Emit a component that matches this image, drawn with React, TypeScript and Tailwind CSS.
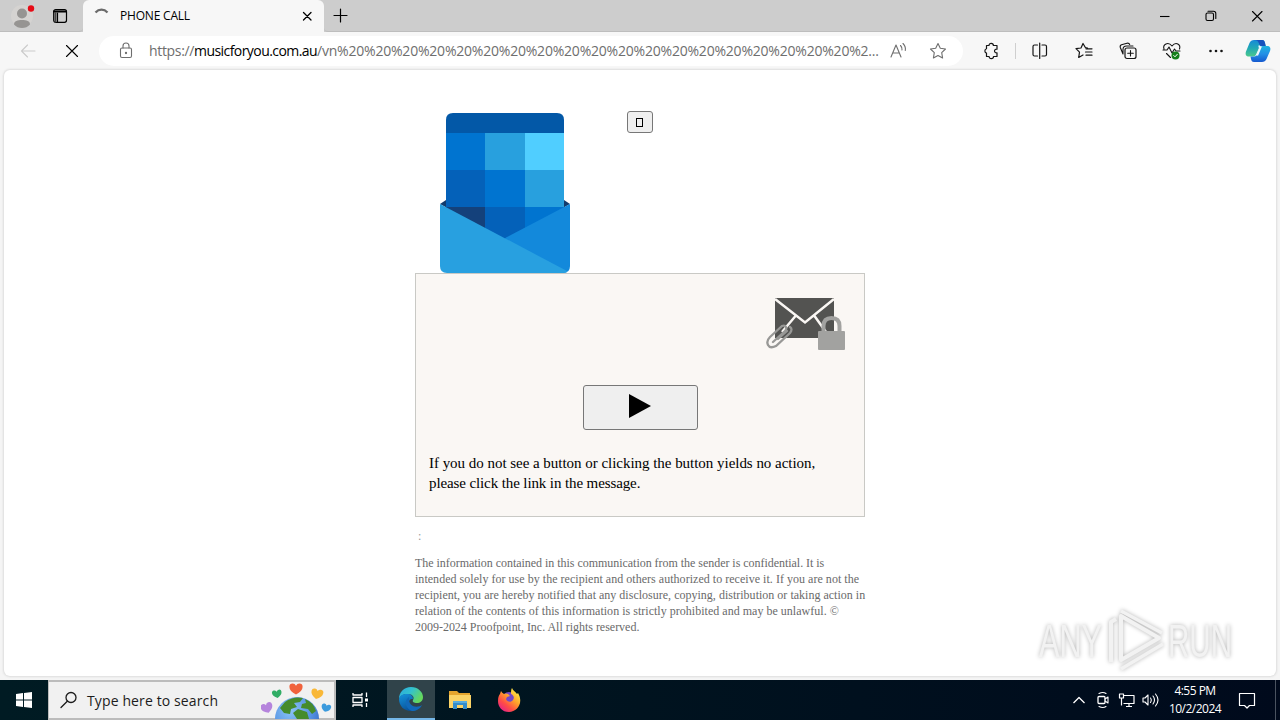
import type { ReactNode } from 'react'

interface IconProps {
  w?: number
  h?: number
  className?: string
  children: ReactNode
}

function Icon({ w = 20, h = 20, className = "", children }: IconProps) {
  return (
    <svg
      width={w}
      height={h}
      viewBox={`0 0 ${w} ${h}`}
      fill="none"
      stroke="currentColor"
      strokeWidth="1.1"
      strokeLinecap="round"
      strokeLinejoin="round"
      className={`shrink-0 ${className}`}
    >
      {children}
    </svg>
  )
}

function TitleBar() {
  return (
    <div className="flex h-8 items-stretch bg-[#cdcdcd]">
      <div className="flex w-[83px] items-center rounded-br-sm border-b border-[#bdbdbd] pl-[11px]">
        <Icon w={26} h={28} className="mt-px">
          <circle cx="11" cy="14" r="11" fill="#d5d3d1" stroke="none" />
          <circle cx="11" cy="11.500" r="5" fill="#969492" stroke="none" />
          <path d="M3 22.500c0-3.500 3.500-4.500 8-4.500s8 1 8 4.500c-2 2.500-5 3.500-8 3.500s-6-1-8-3.500z" fill="#969492" stroke="none" />
          <circle cx="20" cy="6.500" r="3.200" fill="#e60b16" stroke="none" />
        </Icon>
        <Icon w={16} h={16} className="ml-[15px] text-black">
          <rect x="1.700" y="1.700" width="12.800" height="12.600" rx="2" strokeWidth="1.200" />
          <path d="M2 3.500h12" strokeWidth="1.800" />
          <path d="M5.500 5v9" strokeWidth="1.200" />
          <path d="M3.500 5v8.500" strokeWidth="2" stroke="#444" />
        </Icon>
      </div>
      <div className="flex w-[241px] items-center rounded-t-md bg-[#f7f7f7] pl-[11px]">
        <Icon w={16} h={16} className="text-[#6b6b6b]">
          <path d="M1.500 4.500C5 .7 10 .7 13.500 4.500" strokeWidth="2.300" strokeLinecap="butt" />
        </Icon>
        <span className="ml-[10px] w-[181px] text-[12px] leading-4 tracking-[-0.2px] whitespace-nowrap text-black">PHONE CALL</span>
        <Icon w={12} h={12} className="text-black">
          <path d="M2.500 2.500l7.500 7.500M10 2.500l-7.500 7.500" strokeWidth="1.300" />
        </Icon>
      </div>
      <div className="flex flex-1 items-center rounded-bl-sm border-b border-[#bdbdbd] pl-[9px] text-black">
        <Icon w={16} h={16}>
          <path d="M7.500 1v13M1 7.500h13" strokeWidth="1.200" />
        </Icon>
        <Icon w={12} h={12} className="ml-auto">
          <path d="M1 6.500h9.500" strokeLinecap="butt" />
        </Icon>
        <Icon w={12} h={12} className="ml-[34px]">
          <rect x="1" y="3" width="7.500" height="7.500" rx="1.500" />
          <path d="M3 1.200h5.500q2.300 0 2.300 2.300v5" />
        </Icon>
        <Icon w={12} h={12} className="mr-[17px] ml-[34px]">
          <path d="M1.500 1.500l9.500 9.500M11 1.500l-9.500 9.500" />
        </Icon>
      </div>
    </div>
  )
}

function Copilot() {
  return (
    <svg width="26" height="26" viewBox="0 0 26 26" className="shrink-0">
      <defs>
        <linearGradient id="cpA" x1="0" y1="0" x2="0" y2="1">
          <stop offset="0" stopColor="#1689d8" />
          <stop offset=".5" stopColor="#21a9b4" />
          <stop offset="1" stopColor="#4cc98c" />
        </linearGradient>
        <linearGradient id="cpB" x1="0" y1="0" x2="0" y2="1">
          <stop offset="0" stopColor="#1fb3df" />
          <stop offset=".5" stopColor="#2490e6" />
          <stop offset="1" stopColor="#1559cf" />
        </linearGradient>
      </defs>
      <path d="M9 2h8c2 0 2.500 1 3 3l.7 3H17c-2 0-3 1-3.500 3l-2 4.500c-.6 2-1.500 3-3.500 3H4c-3 0-4-2-3-5L4.500 5C5.300 3 7 2 9 2z" fill="url(#cpA)" />
      <path d="M9 2h8c2 0 2.500 1 3 3l.7 3H16c-1 0-1.500-1-2-2.500C13.200 3 12 2 9 2z" fill="#1852bd" />
      <path d="M17 24H9c-2 0-2.500-1-3-3l-.5-2.500H9c2 0 3-1 3.500-3l2-4.500c.6-2 1.500-3 3.500-3H22c3 0 4 2 3 5l-3.500 8c-.8 2-2.500 3-4.500 3z" fill="url(#cpB)" />
      <path d="M16 8.500l-3.800 9M15 8.500h-1.500" stroke="#eef9ff" strokeWidth="1.800" fill="none" />
    </svg>
  )
}

function Toolbar() {
  return (
    <div className="flex h-[38px] items-center bg-[#f7f7f7] pl-5">
      <Icon w={18} h={18} className="text-[#cbcbcb]">
        <path d="M15 9H1.500M7.500 3L1.500 9l6 6" />
      </Icon>
      <Icon w={16} h={16} className="ml-[26px] text-black">
        <path d="M2.500 2.500l11 11M13.500 2.500l-11 11" />
      </Icon>
      <div className="ml-[19px] flex h-[30px] w-[864px] items-center rounded-full bg-white pl-[19px] text-[#6e6e6e]">
        <Icon w={16} h={18}>
          <rect x="2.500" y="6" width="11" height="9.500" rx="1.500" />
          <path d="M5 6V4a3 3 0 0 1 6 0v2" />
          <circle cx="8" cy="11" r=".6" fill="currentColor" />
        </Icon>
        <div className="ml-[15px] w-[742px] text-[14px] leading-5 tracking-[-0.21px] whitespace-nowrap">
          <span className="tracking-[-0.33px]">https://</span>
          <span className="tracking-[-0.57px] text-black">musicforyou.com.au</span>
          /vn%20%20%20%20%20%20%20%20%20%20%20%20%20%20%20%20%20%20%20%2...
        </div>
        <Icon w={18} h={18} className="-ml-px">
          <path d="M1 15L6 3l5 12M2.600 11h6.800M10.500 3.500q2 2 1.500 4.500M13 1.500q3 3 2.300 7" />
        </Icon>
        <Icon w={18} h={18} className="ml-[21px]">
          <path d="M9 1.500l2.300 4.800 5.200.7-3.800 3.700.9 5.300L9 13.500 4.400 16l.9-5.300L1.500 7l5.200-.7z" />
        </Icon>
      </div>
      <div className="flex items-center pl-[20px] text-[#151515]">
        <Icon w={18} h={18}>
          <path d="M3.500 3.500H6a2.200 2.200 0 0 1 4.400 0H14v3.700c-3.300-.4-3.300 4 0 3.600v3.700h-3.500a2.200 2.200 0 0 1-4.400 0H3.500v-3.400a2.300 2.300 0 0 1 0-4.400z" strokeWidth="1.200" />
        </Icon>
        <div className="ml-[14px] h-4 w-px bg-[#cfcfcf]" />
        <Icon w={18} h={18} className="ml-[15px]">
          <path d="M6.500 3H3.500Q2 3 2 4.500v8Q2 14 3.500 14h3M11 3h3q1.500 0 1.500 1.500v8Q15.500 14 14 14h-3M8.700 1v15.500" strokeWidth="1.200" />
        </Icon>
        <Icon w={18} h={18} className="ml-[26px]">
          <path d="M12.500 6l-2-.3L8 1.500 6 6l-5 .7 3.500 3.500-.8 5.300L8 13M11 6.800h6M10.500 10h6.500M11 13.200h6" strokeWidth="1.200" />
        </Icon>
        <Icon w={18} h={18} className="ml-[26px]">
          <rect x="6" y="6" width="11" height="10.500" rx="2" strokeWidth="1.200" />
          <path d="M11.500 8.500v5.500M8.700 11.300h5.600M4 12L1.300 5.500q-.6-2 1.200-2.700l5.500-1.600q2-.4 2.700 1.300M4 12V7.500q0-3.500 3.500-3.500H14" />
        </Icon>
        <Icon w={20} h={20} className="ml-[25px]">
          <path d="M2 8C.5 3.500 6 0 10 5c4-5 9-1.500 7.500 3M4.500 12.500L8.500 16.500M1 9h4l2-3 3 6 2.500-4 1.500 2h4" strokeWidth="1.100" />
          <circle cx="13.500" cy="14.500" r="4" fill="#16801b" stroke="none" />
          <path d="M11.700 14.500l1.300 1.300 2.300-2.500" stroke="white" strokeWidth="1" />
        </Icon>
        <Icon w={18} h={18} className="ml-[25px]">
          <circle cx="3.500" cy="9" r="1.300" fill="currentColor" stroke="none" />
          <circle cx="9" cy="9" r="1.300" fill="currentColor" stroke="none" />
          <circle cx="14.500" cy="9" r="1.300" fill="currentColor" stroke="none" />
        </Icon>
        <div className="ml-[20px]">
          <Copilot />
        </div>
      </div>
    </div>
  )
}

function CalendarLogo() {
  return (
    <svg width="130" height="160" viewBox="0 0 130 160" className="block">
      <defs>
        <clipPath id="envelope">
          <path d="M0 86h130v67q0 7-7 7H7q-7 0-7-7z" />
        </clipPath>
      </defs>
      <path d="M0 91l6-4h118l6 4-65 36z" fill="#123b6d" />
      <path d="M6 20V7q0-7 7-7h104q7 0 7 7v13z" fill="#0358a7" />
      <path d="M6 20h39v37H6z" fill="#0074d0" />
      <path d="M45 20h40v37H45z" fill="#28a0de" />
      <path d="M85 20h39v37H85z" fill="#50ceff" />
      <path d="M6 57h39v37H6z" fill="#0461b9" />
      <path d="M45 57h40v37H45z" fill="#0074d0" />
      <path d="M85 57h39v37H85z" fill="#28a0de" />
      <path d="M6 94h39v30H6z" fill="#14417b" />
      <path d="M45 94h40v32H45z" fill="#0461b9" />
      <path d="M85 94h39v30H85z" fill="#0074d0" />
      <g clipPath="url(#envelope)">
        <path d="M130 91L66 124.500l-10 10L125 162h5z" fill="#1389db" />
        <path d="M0 91l127 67v2H0z" fill="#28a0e0" />
      </g>
    </svg>
  )
}

function SecureMail() {
  return (
    <svg width="80" height="53" viewBox="0 0 80 53" className="block">
      <path d="M9 0h59v40H9z" fill="#535351" />
      <path d="M9 1l30 23.500L68 1M29.500 18L16 34M48.500 18L60 34" fill="none" stroke="#faf7f4" strokeWidth="2.500" />
      <path
        d="M7 44l12-11q2-2 1-4t-4-1L4 39q-4 4-2 8t8 1l14-13q3-4 0-6M12 41l9-8"
        fill="none"
        stroke="#989896"
        strokeWidth="2.300"
        strokeLinecap="round"
      />
      <path d="M57.500 35v-7q0-8 8-8t8 8v7" fill="none" stroke="#a2a2a0" strokeWidth="4" />
      <rect x="52" y="33" width="27" height="19" rx="1" fill="#a2a2a0" />
    </svg>
  )
}

function Watermark() {
  return (
    <svg width="204" height="66" viewBox="0 0 204 66" className="absolute right-[36px] bottom-[3px] drop-shadow-[0_0_2px_rgba(0,0,0,0.3)]">
      <g fill="#f2f2f2" fontFamily="'Liberation Sans Narrow', 'Liberation Sans', sans-serif" fontSize="46">
        <text x="3" y="50" textLength="63" lengthAdjust="spacingAndGlyphs">ANY</text>
        <text x="132" y="50" textLength="64" lengthAdjust="spacingAndGlyphs">RUN</text>
      </g>
      <g fill="none" stroke="#f2f2f2" strokeWidth="4" strokeLinejoin="round">
        <path d="M85 9v44l38-22z" />
        <path d="M80 12l-5 3v40" />
        <path d="M85 4l41 22M85 62l42-25" strokeWidth="3.500" />
      </g>
    </svg>
  )
}

function Page() {
  return (
    <div className="relative mx-1 h-[606px] rounded-md bg-white shadow-[0_0_2px_1px_#dddddd]">
      <div className="mx-auto w-[450px] font-['Liberation_Serif',serif]">
        <div className="flex h-[203px] items-start">
          <div className="pt-[43px] pl-[25px]">
            <CalendarLogo />
          </div>
          <button className="mt-[41px] ml-[57px] flex h-[22px] w-[26px] items-center rounded-[3px] border border-[#777] bg-[#efefef] pt-px pl-2">
            <span className="h-[9px] w-[7px] border border-black" />
          </button>
        </div>
        <div className="h-[244px] border border-[#c9c9c5] bg-[#faf7f4]">
          <div className="flex justify-end pt-6 pr-[18px]">
            <SecureMail />
          </div>
          <button className="mx-auto mt-[34px] flex h-[45px] w-[115px] items-center rounded-[3px] border border-[#777] bg-[#efefef] pb-[3px] pl-[45px]">
            <svg width="22" height="24" viewBox="0 0 22 24">
              <path d="M0 0l22 12L0 24z" fill="black" />
            </svg>
          </button>
          <div className="mt-[23px] pl-[13px] text-[15px] leading-5 whitespace-nowrap text-black">
            <p className="tracking-[-0.03px]">If you do not see a button or clicking the button yields no action,</p>
            <p className="tracking-[-0.11px]">please click the link in the message.</p>
          </div>
        </div>
        <p className="mt-[11px] pl-[3px] text-[12px] leading-4 text-[#999]">:</p>
        <div className="mt-[11px] text-[12px] leading-4 whitespace-nowrap text-[#6a6a6a]">
          <p className="tracking-[-0.035px]">The information contained in this communication from the sender is confidential. It is</p>
          <p className="tracking-[0.03px]">intended solely for use by the recipient and others authorized to receive it. If you are not the</p>
          <p className="tracking-[0.01px]">recipient, you are hereby notified that any disclosure, copying, distribution or taking action in</p>
          <p className="tracking-[0.02px]">relation of the contents of this information is strictly prohibited and may be unlawful. ©</p>
          <p className="tracking-[-0.02px]">2009-2024 Proofpoint, Inc. All rights reserved.</p>
        </div>
      </div>
      <Watermark />
    </div>
  )
}

function EarthArt() {
  return (
    <svg width="72" height="37" viewBox="0 0 72 37" className="block shrink-0">
      <defs>
        <path id="heart" d="M0 5C-4 3-6 1-6-2q0-3 3-3 2 0 3 2 1-2 3-2 3 0 3 3C6 1 4 3 0 5z" />
        <radialGradient id="sea" cx=".35" cy=".3" r=".8">
          <stop offset="0" stopColor="#8cc4f5" />
          <stop offset=".6" stopColor="#5592e3" />
          <stop offset="1" stopColor="#3466c0" />
        </radialGradient>
      </defs>
      <circle cx="36" cy="37" r="22" fill="url(#sea)" />
      <path d="M24 20q8-6 18-4l-3 4-6 1 3 4-6 2-1 5-6-1-4-5zM44 17q8 3 11 12l-4 3-4-5-7-1 1-4 4-1zM37 27l9 3 2 7H36l-4-6z" fill="#458b2c" />
      <use href="#heart" transform="translate(6 26) rotate(-20)" fill="#b584dc" />
      <use href="#heart" transform="translate(16 12) rotate(-10) scale(.8)" fill="#31ad65" />
      <use href="#heart" transform="translate(35 7) scale(1.100)" fill="#f0623d" />
      <use href="#heart" transform="translate(56 12) rotate(12)" fill="#f9b838" />
      <use href="#heart" transform="translate(65 26) rotate(15) scale(.8)" fill="#3b9add" />
    </svg>
  )
}

function EdgeLogo() {
  return (
    <svg width="24" height="24" viewBox="0 0 24 24">
      <defs>
        <linearGradient id="edgeTop" x1="0" y1="0" x2="1" y2=".5">
          <stop offset="0" stopColor="#2ba9dd" />
          <stop offset=".5" stopColor="#33c1cf" />
          <stop offset="1" stopColor="#65d85d" />
        </linearGradient>
        <linearGradient id="edgeLow" x1="0" y1="0" x2=".5" y2="1">
          <stop offset="0" stopColor="#1594dc" />
          <stop offset="1" stopColor="#085098" />
        </linearGradient>
      </defs>
      <path d="M0 12C0 5 5 0 12 0s12 5 12 10c0 4-3 6-6 6-3 0-5-1-4-3 2-3-1-6-5-6-5 0-8 2-9 5z" fill="url(#edgeTop)" />
      <path d="M0 12c1-4 4-5 8-5 4 0 6 2 6 5-5-1-7 8 2 9 3 0 5-1 6-2-2 3-6 5-10 5C5 24 0 19 0 12z" fill="url(#edgeLow)" />
      <path d="M10 10c-6 4-3 12 3 14 4 0 8-2 10-6-4 3-14 3-13-8z" fill="#1169b9" />
    </svg>
  )
}

function FolderIcon() {
  return (
    <svg width="22" height="20" viewBox="0 0 22 20">
      <path d="M0 1h8l2 2h11v15H0z" fill="#e5a52e" />
      <path d="M0 5h22v13H0z" fill="#fbd366" />
      <path d="M4 19v-8h14v8h-4v-4H8v4z" fill="#348cc9" />
      <path d="M4 11h14v2H4z" fill="#57abdd" />
    </svg>
  )
}

function FirefoxIcon() {
  return (
    <svg width="24" height="24" viewBox="0 0 24 24">
      <defs>
        <linearGradient id="fox" x1=".9" y1=".1" x2=".2" y2="1">
          <stop offset="0" stopColor="#fff04a" />
          <stop offset=".4" stopColor="#ffa02b" />
          <stop offset=".7" stopColor="#ff4d45" />
          <stop offset="1" stopColor="#e4208c" />
        </linearGradient>
      </defs>
      <circle cx="12" cy="11" r="7" fill="#7548c8" />
      <path d="M4 3q1 2 3 3 2-1 4 0l2 2-3 1-1 2c1 3 5 4 7 1 2-3 0-5-2-6 0-3 0-4 1-6 1 3 3 3 5 6l1-1c6 10-1 19-9 19C5 24 1 19 1 13c0-4 1-6 2-7z" fill="url(#fox)" />
    </svg>
  )
}

function Taskbar() {
  return (
    <div className="mt-1 flex h-10 bg-linear-to-r from-[#001b23] via-[#00131f] to-[#000a1c] text-white">
      <div className="flex w-12 items-center justify-center">
        <svg width="16" height="16" viewBox="0 0 16 16" fill="white">
          <path d="M0 2l7-1v6.500H0zM8 1l8-1v7.500H8zM0 8.500h7V15l-7-1zM8 8.500h8V16l-8-1z" />
        </svg>
      </div>
      <div className="flex w-[288px] items-center border-2 border-l border-[#bcbcbc] bg-[#f1f1f1] pl-[11px] text-[#1c1c1c]">
        <Icon w={18} h={18}>
          <circle cx="11" cy="6.500" r="5" strokeWidth="1.300" />
          <path d="M7.300 10.200L1 16.500" strokeWidth="1.300" />
        </Icon>
        <span className="mt-px ml-[9px] w-[174px] text-[14px] tracking-[0.12px] whitespace-nowrap">Type here to search</span>
        <EarthArt />
      </div>
      <div className="flex w-[51px] items-center justify-center">
        <Icon w={18} h={18} className="-ml-[3px]">
          <path d="M2 2v2h9V2M2 16v-2h9v2M2 6.500h9v5H2zM15.500 1.500v4.500M15.500 12v4" strokeWidth="1.300" strokeLinecap="butt" />
          <path d="M14 7.500h3v3h-3z" fill="currentColor" stroke="none" />
        </Icon>
      </div>
      <div className="flex w-12 items-center justify-center border-b-2 border-[#75b7e8] bg-[#30434a]">
        <EdgeLogo />
      </div>
      <div className="flex w-[49px] items-center justify-center">
        <FolderIcon />
      </div>
      <div className="flex w-[49px] items-center justify-center">
        <FirefoxIcon />
      </div>
      <div className="ml-auto flex items-center">
        <Icon w={14} h={10}>
          <path d="M1.500 8l5.500-5.500L12.500 8" strokeWidth="1.300" strokeLinecap="butt" />
        </Icon>
        <Icon w={14} h={18} className="ml-[10px]">
          <rect x="2" y="5.500" width="7" height="7" rx="1" strokeWidth="1.300" />
          <path d="M9 8l3-2v6L9 10M3 2.500q4-2 7 0M3 15.500q4 2 7 0" />
        </Icon>
        <Icon w={18} h={16} className="ml-[8px]">
          <path d="M5.500 3.500H16v8H5.500M3.500 6.500v7M8 14.500h6M11 12v2M1.500 2h4v4h-4z" strokeWidth="1.200" strokeLinecap="butt" />
        </Icon>
        <Icon w={18} h={16} className="ml-[6px]">
          <path d="M1 6h2l3-3v10L3 10H1zM8.500 6q1.500 2 0 4.500M11 4q3 4 0 8M13.500 2q5 6 0 12" />
        </Icon>
        <div className="ml-[8px] w-[54px] text-center text-[12px] leading-[18px] tracking-[-0.52px] whitespace-nowrap">
          <div>4:55 PM</div>
          <div>10/2/2024</div>
        </div>
        <Icon w={18} h={18} className="ml-[16px]">
          <path d="M1.500 2.500h15v12h-5L9 17l-2.500-2.500h-5z" strokeWidth="1.200" />
        </Icon>
        <div className="ml-[19px] h-10 w-px bg-[#4a5360]" />
        <div className="w-1" />
      </div>
    </div>
  )
}

export default function App() {
  return (
    <div className="h-[720px] w-[1280px] overflow-hidden bg-[#f5f5f5] font-['Open_Sans','Noto_Sans',sans-serif]">
      <TitleBar />
      <Toolbar />
      <Page />
      <Taskbar />
    </div>
  )
}
